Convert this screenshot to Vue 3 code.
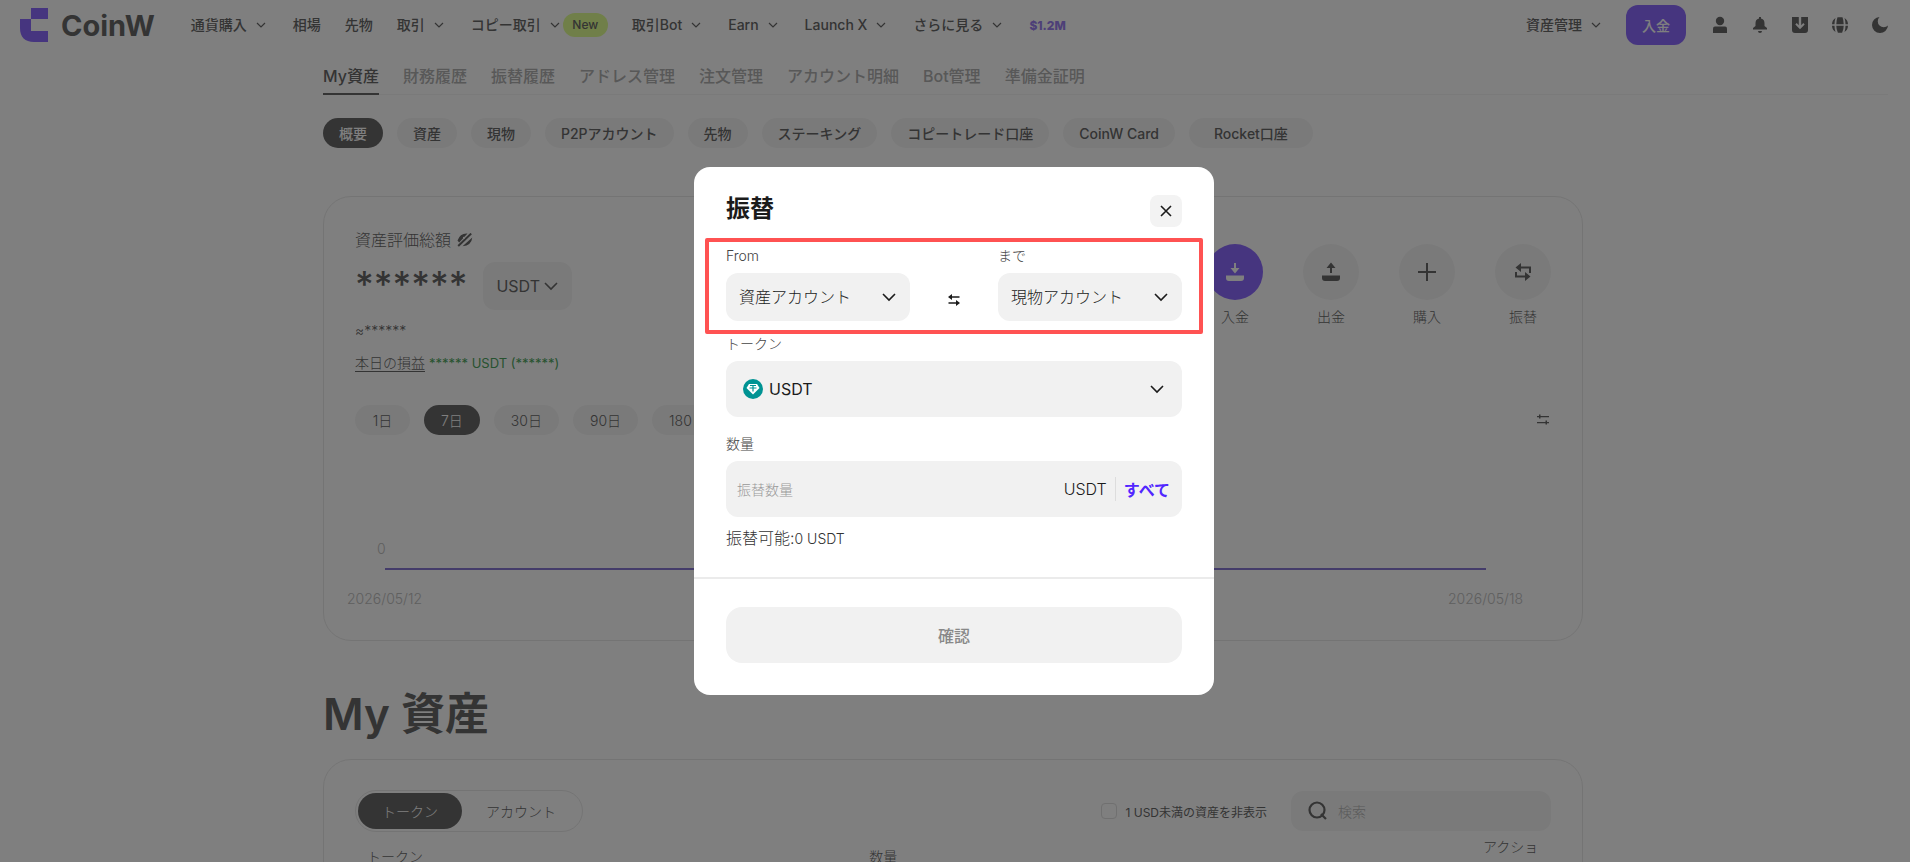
<script setup>
import { ref } from 'vue'

const navItems = [
  { label: '通貨購入', arrow: true },
  { label: '相場' },
  { label: '先物' },
  { label: '取引', arrow: true },
  { label: 'コピー取引', arrow: true, badge: 'New' },
  { label: '取引Bot', arrow: true },
  { label: 'Earn', arrow: true },
  { label: 'Launch X', arrow: true },
  { label: 'さらに見る', arrow: true }
]

const tabs = ['My資産', '財務履歴', '振替履歴', 'アドレス管理', '注文管理', 'アカウント明細', 'Bot管理', '準備金証明']
const activeTab = ref('My資産')

const accounts = ['概要', '資産', '現物', 'P2Pアカウント', '先物', 'ステーキング', 'コピートレード口座', 'CoinW Card', 'Rocket口座']
const activeAccount = ref('概要')

const ranges = ['1日', '7日', '30日', '90日', '180日']
const activeRange = ref('7日')

const listMode = ref('token')
const hideSmall = ref(false)
const keyword = ref('')
const currency = ref('USDT')

// Transfer form
const showTransfer = ref(true)
const fromAccount = ref('資産アカウント')
const toAccount = ref('現物アカウント')
const token = ref('USDT')
const amount = ref('')

const swapAccounts = () => {
  const from = fromAccount.value
  fromAccount.value = toAccount.value
  toAccount.value = from
}
</script>

<template>
  <div class="page">
    <header class="header">
      <a href="#" class="logo">
        <svg width="28" height="34" viewBox="0 0 28 34"><path d="M11 0h17v11H11z M0 11h11v12h17v11H14C5 34 0 29 0 20z" /></svg>
        <span>CoinW</span>
      </a>
      <nav class="nav">
        <a v-for="item in navItems" :key="item.label" href="#" class="nav-item">
          {{ item.label }}
          <svg v-if="item.arrow" class="arrow" width="16" height="16" viewBox="0 0 16 16"><path d="M4 6l4 4 4-4" /></svg>
          <span v-if="item.badge" class="badge">{{ item.badge }}</span>
        </a>
        <a href="#" class="promo">$1.2M</a>
      </nav>
      <div class="header-right">
        <a href="#" class="nav-item">
          資産管理
          <svg class="arrow" width="16" height="16" viewBox="0 0 16 16"><path d="M4 6l4 4 4-4" /></svg>
        </a>
        <button type="button" class="btn-deposit">入金</button>
        <div class="tools">
          <button type="button" aria-label="プロフィール">
            <svg width="16" height="18" viewBox="0 0 16 18"><circle cx="8" cy="5" r="4.2" /><path d="M1 17v-4.500q0-2 2-2h10q2 0 2 2V17z" /></svg>
          </button>
          <button type="button" aria-label="通知">
            <svg width="16" height="18" viewBox="0 0 16 18"><path d="M7 1h2v1.500c2.800.6 3.500 2.600 3.500 5V10l2.500 2v1.500H1V12l2.500-2V7.500c0-2.400.7-4.400 3.500-5z M6 15h4q0 2-2 2t-2-2z" /></svg>
          </button>
          <button type="button" aria-label="ダウンロード">
            <svg width="16" height="18" viewBox="0 0 16 18"><path d="M0 1h6.800v8.200L4.700 7.100l-1.400 1.400L8 13.200l4.700-4.700-1.400-1.400-2.100 2.100V1H16v13q0 3-3 3H3q-3 0-3-3z" /></svg>
          </button>
          <button type="button" aria-label="言語">
            <svg width="18" height="18" viewBox="0 0 18 18"><path d="M6.500 1.300h5q1.200 3 1.200 6.900H5.300q0-3.900 1.200-6.900z M4.500 2q-1 3-1 6.200H1Q1.200 4 4.500 2z M13.500 2q1 3 1 6.200H17Q16.800 4 13.500 2z M5.300 9.800h7.400q0 3.900-1.600 6.900H6.900q-1.600-3-1.600-6.900z M1 9.800h2.500q0 3.200 1 6.200Q1.200 14 1 9.800z M17 9.800h-2.500q0 3.200-1 6.200 3.300-2 3.500-6.200z" /></svg>
          </button>
          <button type="button" aria-label="テーマ">
            <svg width="16" height="18" viewBox="0 0 16 18"><path d="M7.500 1A8 8 0 1 0 16 9.500 5.200 5.200 0 1 1 7.500 1z" /></svg>
          </button>
        </div>
      </div>
    </header>

    <main class="content">
      <nav class="tabs">
        <a v-for="tab in tabs" :key="tab" href="#" class="tab" :class="{ active: tab === activeTab }" @click.prevent="activeTab = tab">{{ tab }}</a>
      </nav>

      <div class="pills accounts">
        <button v-for="name in accounts" :key="name" type="button" class="pill" :class="{ active: name === activeAccount }" @click="activeAccount = name">{{ name }}</button>
      </div>

      <section class="card overview">
        <div class="overview-top">
          <div class="balance">
            <div class="balance-title">
              資産評価総額
              <svg width="16" height="14" viewBox="0 0 16 14"><path d="M10.500.5Q3 0 .5 7.500L2.200 9.500z M15.300 4.500Q14.500 12.500 5.500 13.200z" /><path class="slash" d="M1.200 13L14.200.6" /><circle cx="7" cy="4.800" r="1.100" class="hole" /></svg>
            </div>
            <div class="balance-row">
              <span class="stars">******</span>
              <div class="select currency">
                <select v-model="currency" aria-label="通貨">
                  <option>USDT</option>
                </select>
                <svg width="16" height="16" viewBox="0 0 16 16"><path d="M2 5l6 6 6-6" /></svg>
              </div>
            </div>
            <p class="approx">≈******</p>
            <p class="profit"><a href="#">本日の損益</a> <span>****** USDT (******)</span></p>
          </div>
          <div class="actions">
            <button type="button" class="action primary">
              <span class="circle"><svg width="20" height="20" viewBox="0 0 20 20"><path d="M9 1h2v5h3.500L10 11.500 5.500 6H9z M1 13.500h18V16q0 3-3 3H4q-3 0-3-3z" /></svg></span>
              入金
            </button>
            <button type="button" class="action">
              <span class="circle"><svg width="20" height="20" viewBox="0 0 20 20"><path d="M10 .5L14.500 6H11v5H9V6H5.500z M1 13.500h18V16q0 3-3 3H4q-3 0-3-3z" /></svg></span>
              出金
            </button>
            <button type="button" class="action">
              <span class="circle"><svg width="20" height="20" viewBox="0 0 20 20"><path d="M9 1h2v8h8v2h-8v8H9v-8H1V9h8z" /></svg></span>
              購入
            </button>
            <button type="button" class="action" @click="showTransfer = true">
              <span class="circle"><svg width="20" height="20" viewBox="0 0 20 20"><path d="M2.500 5.500L8 1v3.500h10V11h-2V6.500H8V10z M2 10h2v3.500h8V10l5.500 4.500L12 19v-3.500H2z" /></svg></span>
              振替
            </button>
          </div>
        </div>

        <div class="range-row">
          <div class="pills ranges">
            <button v-for="range in ranges" :key="range" type="button" class="pill" :class="{ active: range === activeRange }" @click="activeRange = range">{{ range }}</button>
          </div>
          <button type="button" class="btn-filter" aria-label="フィルター">
            <svg width="12" height="12" viewBox="0 0 12 12"><path d="M0 2h12v1.200H0z M2 .5h1.500v4H2z M0 8h12v1.200H0z M8.500 6.500H10v4H8.500z" /></svg>
          </button>
        </div>

        <div class="chart">
          <span class="chart-zero">0</span>
          <div class="chart-line"></div>
          <div class="chart-dates"><span>2026/05/12</span><span>2026/05/18</span></div>
        </div>
      </section>

      <h1 class="title">My 資産</h1>

      <section class="card assets">
        <div class="assets-bar">
          <div class="toggle">
            <button type="button" :class="{ active: listMode === 'token' }" @click="listMode = 'token'">トークン</button>
            <button type="button" :class="{ active: listMode === 'account' }" @click="listMode = 'account'">アカウント</button>
          </div>
          <div class="assets-filter">
            <label class="check"><input v-model="hideSmall" type="checkbox" />1 USD未満の資産を非表示</label>
            <label class="search">
              <svg width="20" height="20" viewBox="0 0 20 20"><circle cx="9" cy="9" r="7.500" /><path d="M13 13l5 5" /></svg>
              <input v-model="keyword" type="text" placeholder="検索" aria-label="検索" />
            </label>
          </div>
        </div>
        <table class="assets-table">
          <thead>
            <tr>
              <th class="col-token">トークン</th>
              <th>数量</th>
              <th class="col-action">アクション</th>
            </tr>
          </thead>
        </table>
      </section>
    </main>

    <div v-if="showTransfer" class="overlay">
      <form class="modal" @submit.prevent>
        <div class="modal-head">
          <h2>振替</h2>
          <button type="button" class="btn-close" aria-label="閉じる" @click="showTransfer = false">
            <svg width="12" height="12" viewBox="0 0 12 12"><path d="M1 1l10 10M11 1L1 11" /></svg>
          </button>
        </div>

        <div class="route">
          <div class="field">
            <label for="from">From</label>
            <div class="select account">
              <select id="from" v-model="fromAccount">
                <option>資産アカウント</option>
                <option>現物アカウント</option>
              </select>
              <svg width="16" height="16" viewBox="0 0 16 16"><path d="M2 5l6 6 6-6" /></svg>
            </div>
          </div>
          <button type="button" class="btn-swap" aria-label="入れ替え" @click="swapAccounts">
            <svg width="12" height="12" viewBox="0 0 12 12"><path d="M0 3L4 0v2.200h7.500v1.600H4V6z M12 9L8 6v2.200H.5v1.600H8V12z" /></svg>
          </button>
          <div class="field">
            <label for="to">まで</label>
            <div class="select account">
              <select id="to" v-model="toAccount">
                <option>資産アカウント</option>
                <option>現物アカウント</option>
              </select>
              <svg width="16" height="16" viewBox="0 0 16 16"><path d="M2 5l6 6 6-6" /></svg>
            </div>
          </div>
        </div>

        <div class="field token-field">
          <label for="token">トークン</label>
          <div class="select token">
            <svg class="coin" width="20" height="20" viewBox="0 0 20 20"><circle cx="10" cy="10" r="10" fill="#009393" /><path d="M6 5h8l2.500 4L10 15.500 3.500 9z" fill="#fff" /><path d="M7 6.500h6M10 6.500v6M6.500 9h7" stroke="#009393" stroke-width="1.200" fill="none" /></svg>
            <select id="token" v-model="token">
              <option>USDT</option>
            </select>
            <svg width="16" height="16" viewBox="0 0 16 16"><path d="M2 5l6 6 6-6" /></svg>
          </div>
        </div>

        <div class="field amount-field">
          <label for="amount">数量</label>
          <div class="amount">
            <input id="amount" v-model="amount" type="text" placeholder="振替数量" />
            <span class="unit">USDT</span>
            <button type="button" class="btn-all">すべて</button>
          </div>
        </div>
        <p class="available">振替可能:<small>0 USDT</small></p>

        <div class="modal-foot">
          <button type="submit" class="btn-submit" disabled>確認</button>
        </div>
      </form>
    </div>
  </div>
</template>

<style>
body { margin: 0; background: #fff; }
</style>

<style scoped>
* { box-sizing: border-box; }
.page { height: 100vh; overflow: hidden; font-family: Inter, "Noto Sans CJK JP", sans-serif; font-size: 14px; color: #686868; }
a { color: inherit; text-decoration: none; }
button, input, select { font: inherit; color: inherit; border: none; background: none; padding: 0; margin: 0; outline: none; }
button { cursor: pointer; }
p, h1, h2 { margin: 0; }
svg { display: block; flex: none; fill: currentColor; }

.header { display: flex; align-items: center; height: 50px; padding: 0 18px 0 20px; }
.logo { display: flex; align-items: center; gap: 13px; font-size: 29px; font-weight: 700; }
.logo svg { color: #8c6afe; }
.nav { display: flex; align-items: center; gap: 24px; margin-left: 36px; }
.nav-item { display: flex; align-items: center; font-weight: 500; line-height: 20px; white-space: nowrap; }
.arrow { margin-left: 6px; fill: none; stroke: currentColor; stroke-width: 1.2; }
.badge { width: 45px; height: 24px; border-radius: 12px; background: #e0fe92; font-size: 12px; font-weight: 500; line-height: 24px; text-align: center; }
.promo { font-size: 12px; font-weight: 800; color: #9a80f0; }
.header-right { display: flex; align-items: center; gap: 22px; margin-left: auto; }
.btn-deposit { width: 60px; height: 40px; border-radius: 12px; background: #8c6afe; color: #fff; font-weight: 500; }
.tools { display: flex; gap: 16px; }
.tools button { display: flex; justify-content: center; align-items: center; width: 24px; height: 24px; }

.content { padding: 0 22px 0 max(24px, calc(50% - 632px)); }
.tabs { display: flex; gap: 24px; height: 45px; border-bottom: 1px solid #f4f4f4; font-size: 16px; font-weight: 500; color: #b0b0b0; white-space: nowrap; }
.tab { height: 45px; padding-top: 14px; line-height: 24px; }
.tab.active { color: #686868; border-bottom: 2px solid #686868; }
.pills { display: flex; gap: 14px; }
.pill { height: 30px; padding: 0 16px; border-radius: 15px; background: #f5f5f5; white-space: nowrap; }
.pill.active { background: #686868; color: #fff; }
.accounts { margin: 23px 0 48px; font-weight: 500; }
.accounts .pill:last-child { padding: 0 25px; }

.card { max-width: 1260px; padding: 32px 31px; border: 1px solid #e9e9e9; border-radius: 28px; }
.overview { height: 445px; padding-top: 30px; }
.overview-top { display: flex; justify-content: space-between; }
.balance-title { display: flex; align-items: center; gap: 6px; font-size: 16px; font-weight: 300; line-height: 26px; }
.balance-title .slash { stroke: currentColor; stroke-width: 2; }
.balance-title .hole { fill: #fff; }
.balance-row { display: flex; gap: 16px; margin-top: 9px; }
.stars { font-size: 36px; font-weight: 500; line-height: 44px; }
.select { position: relative; }
.select select { appearance: none; width: 100%; height: 100%; padding: 0 40px 0 13px; font-size: 16px; cursor: pointer; }
.select svg { position: absolute; top: 50%; right: 13px; margin-top: -8px; fill: none; stroke: currentColor; stroke-width: 1.6; pointer-events: none; }
.currency { width: 89px; height: 48px; border-radius: 12px; background: #f5f5f5; }
.currency select { padding-right: 0; }
.approx { margin-top: 11px; line-height: 20px; font-weight: 300; }
.profit { margin-top: 12px; line-height: 20px; font-weight: 300; }
.profit a { border-bottom: 1px solid currentColor; }
.profit span { color: #4ea560; font-size: 13px; font-weight: 400; }
.actions { display: flex; gap: 40px; padding-top: 17px; }
.action { display: flex; flex-direction: column; align-items: center; gap: 7px; height: 84px; line-height: 20px; font-weight: 300; }
.circle { display: flex; align-items: center; justify-content: center; width: 56px; height: 56px; border-radius: 50%; background: #f5f5f5; }
.action.primary .circle { background: #8c6afe; color: #fff; }
.range-row { display: flex; justify-content: space-between; align-items: center; margin-top: 32px; padding-right: 2px; font-weight: 300; }
.ranges .pill { min-width: 55px; padding: 0 17px; }
.chart { margin: 104px 28px 0 -8px; font-weight: 300; color: #c0c0c0; line-height: 20px; }
.chart-zero { display: block; padding-left: 30px; }
.chart-line { height: 2px; margin: 9px 37px 0 38px; background: #8878d4; }
.chart-dates { display: flex; justify-content: space-between; margin-top: 19px; }

.title { margin: 40px 0 12px; font-size: 44px; font-weight: 600; line-height: 66px; }
.assets { height: 500px; padding-top: 30px; }
.assets-bar { display: flex; justify-content: space-between; }
.toggle { display: flex; padding: 2px; border: 1px solid #e9e9e9; border-radius: 21px; }
.toggle button { height: 36px; padding: 0 24px; border-radius: 18px; font-weight: 300; }
.toggle .active { background: #686868; color: #fff; }
.assets-filter { display: flex; align-items: center; gap: 24px; }
.check { display: flex; align-items: center; gap: 8px; font-size: 12px; font-weight: 400; }
.check input { appearance: none; width: 16px; height: 16px; border: 1px solid #e0e0e0; border-radius: 4px; }
.search { display: flex; align-items: center; gap: 10px; width: 260px; height: 40px; padding: 0 17px; border-radius: 12px; background: #f5f5f5; }
.search svg { fill: none; stroke: currentColor; stroke-width: 2.2; }
.search input { width: 100%; min-width: 0; font-weight: 300; }
.search input::placeholder { color: #b4b4b4; }
.assets-table { width: 100%; margin-top: 5px; border-collapse: collapse; table-layout: fixed; }
.assets-table th { padding: 0 12px; font-weight: 300; line-height: 20px; text-align: left; }
.col-token { width: 42%; }
.assets-table .col-action { width: 80px; }

.overlay { position: fixed; inset: 0; display: flex; align-items: center; justify-content: center; padding-right: 2px; background: rgba(0, 0, 0, 0.5); }
.modal { width: 520px; border-radius: 16px; background: #fff; color: #1b1b1b; }
.modal-head { display: flex; justify-content: space-between; align-items: flex-start; height: 71px; padding: 24px 32px 0; }
.modal-head h2 { font-size: 24px; font-weight: 600; line-height: 36px; }
.btn-close { display: flex; align-items: center; justify-content: center; width: 32px; height: 32px; margin-top: 4px; border-radius: 8px; background: #f3f3f3; }
.btn-close svg { stroke: currentColor; stroke-width: 1.6; }
.route { display: flex; justify-content: space-between; margin: 0 11px; height: 96px; padding: 4px 17px 0; border: 4px solid #ff5252; border-radius: 2px; }
.field label { display: block; margin-bottom: 7px; line-height: 20px; font-weight: 300; color: #444; }
.select.account { width: 184px; height: 48px; border-radius: 12px; background: #f1f1f1; }
.account select { font-weight: 300; }
.btn-swap { align-self: flex-end; margin-bottom: 24px; }
.token-field { padding: 0 32px; }
.select.token { height: 56px; border-radius: 12px; background: #f1f1f1; }
.token select { padding-left: 43px; }
.token svg { right: 17px; }
.token .coin { left: 17px; right: auto; margin-top: -10px; stroke: none; }
.amount-field { padding: 17px 32px 0; }
.amount { display: flex; align-items: center; height: 56px; padding: 0 12px 0 11px; border-radius: 12px; background: #f1f1f1; }
.amount input { flex: 1; min-width: 0; font-weight: 300; }
.amount input::placeholder { color: #999; }
.unit { padding-right: 8px; border-right: 1px solid #ddd; font-size: 16px; font-weight: 300; line-height: 24px; }
.btn-all { padding-left: 8px; font-size: 16px; font-weight: 600; color: #5227ff; }
.available { padding: 9px 32px 0; font-size: 16px; font-weight: 300; line-height: 24px; color: #333; }
.available small { font-size: 14px; }
.modal-foot { margin-top: 26px; padding: 28px 32px 32px; border-top: 2px solid #ebebeb; }
.btn-submit { display: block; width: 100%; height: 56px; border-radius: 16px; background: #f1f1f1; font-size: 16px; font-weight: 500; color: #888; }
</style>
